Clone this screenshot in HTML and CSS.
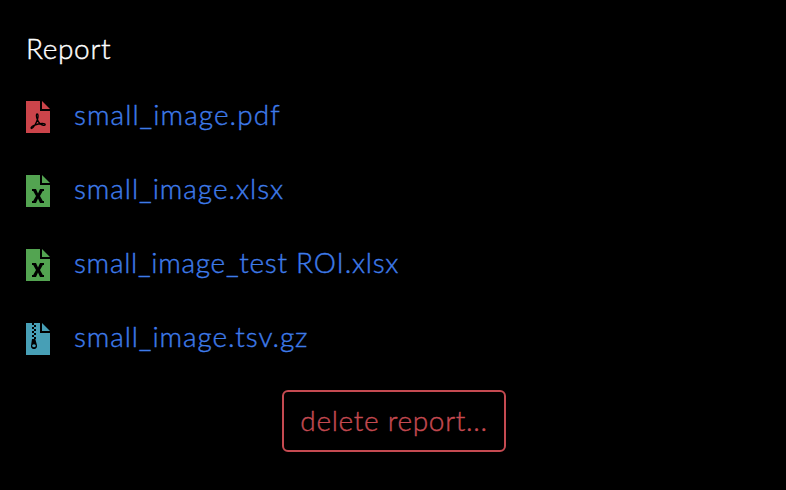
FILE: index.html
```
<!DOCTYPE html>
<html lang="en">
<head>
<meta charset="utf-8">
<title>Report</title>
<link rel="stylesheet" href="styles.css">
</head>
<body>
<main class="report">
  <h1 class="title">Report</h1>
  <ul class="files">
    <li class="file">
      <svg class="icon pdf" viewBox="0 0 24 32"><path d="M0 0H14V10H24V32H0ZM16 0L24 8H16Z"/><path class="mark" d="M11.4 18.5C10.2 16.3 10.1 13 11.1 13C12.4 13 12.3 16 11.4 18.5C10.3 22 7.4 27.4 5.6 27.5C4.3 27.5 5.2 25.6 8 24.4C11.3 23 15.5 22.3 17.8 22.6C20 23 19.4 24.7 17.3 24.3C14.6 23.7 12.4 21.4 11.4 18.5Z"/></svg>
      <a class="link l1">small_image.pdf</a>
    </li>
    <li class="file">
      <svg class="icon xls" viewBox="0 0 24 32"><path d="M0 0H14V10H24V32H0ZM16 0L24 8H16Z"/><path class="solid" d="M6 14H10L12 18.6L14 14H18V16H16.8L14 21L16.8 26H18V28H14L12 23.4L10 28H6V26H7.2L10 21L7.2 16H6Z"/></svg>
      <a class="link l2">small_image.xlsx</a>
    </li>
    <li class="file">
      <svg class="icon xls" viewBox="0 0 24 32"><path d="M0 0H14V10H24V32H0ZM16 0L24 8H16Z"/><path class="solid" d="M6 14H10L12 18.6L14 14H18V16H16.8L14 21L16.8 26H18V28H14L12 23.4L10 28H6V26H7.2L10 21L7.2 16H6Z"/></svg>
      <a class="link l3">small_image_test ROI.xlsx</a>
    </li>
    <li class="file">
      <svg class="icon zip" viewBox="0 0 24 32"><path d="M0 0H14V10H24V32H0ZM16 0L24 8H16Z"/><path class="solid" fill-rule="evenodd" d="M6 0H8V2H6ZM8 2H10V4H8ZM6 4H8V6H6ZM8 6H10V8H8ZM6 8H8V10H6ZM8 10H10V12H8ZM6 12H8V14H6ZM8 14H10V16H8ZM6 16H9.3L10.8 21.5C11.6 24.4 10.2 26 8 26C5.8 26 4.4 24.4 5.2 21.5ZM8 21.2C5.6 21.2 5.6 24.2 8 24.2C10.4 24.2 10.4 21.2 8 21.2Z"/></svg>
      <a class="link l4">small_image.tsv.gz</a>
    </li>
  </ul>
  <button class="delete">delete report...</button>
</main>
</body>
</html>
```
FILE: styles.css
```
* { box-sizing: border-box; }
body {
  margin: 0;
  background: #000;
  color: #fff;
  font: 300 28px/38px Lato, "Open Sans", sans-serif;
  -webkit-text-stroke: 0.4px currentColor;
}
.report {
  display: flex;
  flex-direction: column;
  height: 490px;
  padding: 29px 26px 0;
}
.title { margin: 0; font: inherit; letter-spacing: 0.65px; }
.files {
  list-style: none;
  margin: 13px 0 0;
  padding: 0;
}
.file {
  display: flex;
  align-items: center;
  gap: 24px;
  height: 74px;
}
.icon { width: 24px; height: 32px; flex: none; }
.pdf { fill: #cb444a; }
.xls { fill: #53a451; }
.zip { fill: #479fb6; }
.mark { fill: none; stroke: #000; stroke-width: 1.3; }
.solid { fill: #000; }
.link {
  padding-bottom: 6px;
  color: #3e7bea;
  white-space: nowrap;
  -webkit-text-stroke-color: #3e7bea;
}
.l1 { letter-spacing: 1.05px; }
.l2 { letter-spacing: 0.95px; }
.l3 { letter-spacing: 0.72px; }
.l4 { letter-spacing: 0.9px; }
.delete {
  align-self: center;
  width: 224px;
  height: 62px;
  margin: 14px 0 0 2px;
  padding: 0 0 2px;
  border: 2px solid #c54a51;
  border-radius: 6px;
  background: none;
  color: #c54a51;
  -webkit-text-stroke-color: #c54a51;
  font: inherit;
  letter-spacing: 0.68px;
  white-space: nowrap;
}
```
